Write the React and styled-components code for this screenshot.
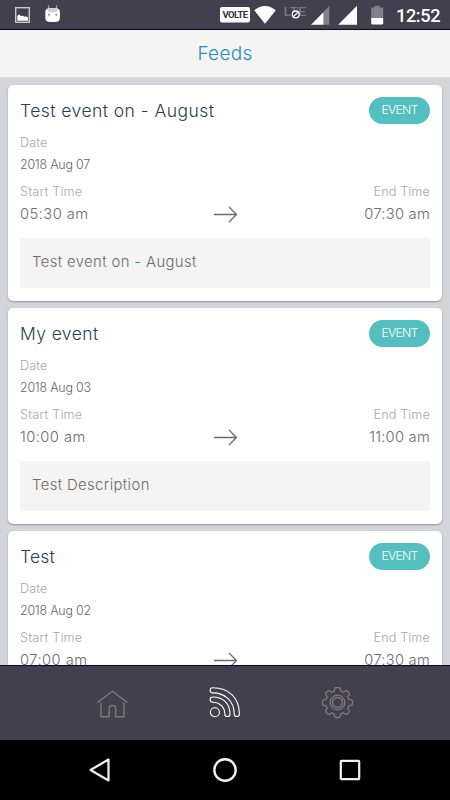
import React from 'react';
import styled, { createGlobalStyle } from 'styled-components';

const GlobalStyle = createGlobalStyle`
  body {
    margin: 0;
    overflow: hidden;
  }
`;

const Screen = styled.div`
  width: 450px;
  height: 800px;
  display: flex;
  flex-direction: column;
  overflow: hidden;
  background: #d2d6db;
  font-family: Inter, "Open Sans", sans-serif;
  font-weight: 300;
`;

const StatusBar = styled.div`
  height: 30px;
  flex: none;
  box-sizing: border-box;
  display: flex;
  justify-content: space-between;
  background: #423f4e;
  border-bottom: 1px solid #0b0720;
`;

const Header = styled.div`
  height: 48px;
  flex: none;
  box-sizing: border-box;
  background: #f4f4f4;
  border-bottom: 1px solid #dcdfe2;
  color: #2191bd;
  font-size: 19px;
  letter-spacing: 0.3px;
  line-height: 48px;
  text-align: center;
`;

const Feed = styled.div`
  flex: 1;
  min-height: 0;
  overflow: hidden;
  padding: 7px 8px 0;
`;

const Card = styled.div`
  height: 215.5px;
  box-sizing: border-box;
  margin-bottom: 7.5px;
  padding: 12px;
  border-radius: 5px;
  background: #fff;
  box-shadow: 0 1px 2px rgba(50, 60, 75, 0.45);
`;

const CardHeader = styled.div`
  height: 27px;
  margin-bottom: 10px;
  display: flex;
  justify-content: space-between;
`;

const Title = styled.div`
  color: #1f4254;
  font-size: 17.5px;
  line-height: 27px;
  letter-spacing: ${({ $spacing }) => $spacing}px;
  white-space: nowrap;
`;

const Badge = styled.div`
  width: 61px;
  height: 27px;
  border-radius: 14px;
  background: #53c0bf;
  color: #fff;
  font-size: 12.2px;
  font-weight: 350;
  letter-spacing: -0.7px;
  line-height: 26px;
  text-align: center;
`;

const Label = styled.div`
  color: #a8a8a8;
  font-size: 12.7px;
  line-height: 18px;
  letter-spacing: ${({ $spacing = 0.1 }) => $spacing}px;
`;

const DateValue = styled.div`
  margin-top: 3px;
  color: #666;
  font-size: 12.4px;
  font-weight: 350;
  line-height: 19px;
  letter-spacing: -0.2px;
`;

const Row = styled.div`
  margin-top: ${({ $top }) => $top}px;
  display: flex;
  align-items: center;
  justify-content: space-between;
`;

const Time = styled.div`
  width: 90px;
  color: #6b6b6b;
  font-size: 14.7px;
  font-weight: 350;
  line-height: 23px;
  letter-spacing: ${({ $spacing }) => $spacing}px;
  text-align: ${({ $align = 'left' }) => $align};
`;

const Description = styled.div`
  height: 50px;
  margin-top: 12px;
  padding: 0 12px;
  background: #f4f4f4;
  color: #6b6b6b;
  font-size: 14.8px;
  font-weight: 350;
  line-height: 48px;
  letter-spacing: ${({ $spacing }) => $spacing}px;
`;

const TabBar = styled.div`
  height: 75px;
  flex: none;
  box-sizing: border-box;
  padding: 0 56px;
  display: flex;
  align-items: center;
  background: #423f4e;
  border-top: 1px solid #0b0720;
`;

const Tab = styled.div`
  flex: 1;
  display: flex;
  justify-content: center;
  color: ${({ $active }) => ($active ? '#fff' : '#7d7a7e')};
`;

const NavBar = styled.div`
  height: 60px;
  flex: none;
  padding: 0 38px;
  box-sizing: border-box;
  display: flex;
  align-items: center;
  background: #000;
  color: #f2f2f2;
`;

const StatusGroup = styled.div`
  height: 29px;
  display: flex;
`;

const Clock = styled.div`
  width: 54px;
  color: #fff;
  font-family: Roboto, sans-serif;
  font-size: 18.2px;
  font-weight: 500;
  line-height: 31px;
  letter-spacing: -0.4px;
`;

const events = [
  { title: 'Test event on - August', date: '2018 Aug 07', start: '05:30 am', end: '07:30 am', description: 'Test event on - August', titleSpacing: 0.45 },
  { title: 'My event', date: '2018 Aug 03', start: '10:00 am', end: '11:00 am', description: 'Test Description', titleSpacing: 0.4 },
  { title: 'Test', date: '2018 Aug 02', start: '07:00 am', end: '07:30 am', description: 'Test', titleSpacing: 0.2 },
];

const Arrow = () => (
  <svg width="24" height="18" viewBox="0 0 24 18" fill="none" stroke="#6b6b6b" strokeWidth="1.3">
    <path d="M1 8.5H23.5M16 1L23.5 8.5L16 16" />
  </svg>
);

const NoticeIcons = () => (
  <svg width="70" height="29" viewBox="0 0 70 29">
    <rect x="15.7" y="7.7" width="13.6" height="14.6" fill="none" stroke="#c9c8cd" strokeWidth="1.4" />
    <path d="M17.3 20.7V16l1.7-1.7 2 1.9 1.4-.8 2 1.4 1.3-.6 2.3 1.2v3.3z" fill="#fff" />
    <path d="M48.2 5.2L49.3 9M57 5.2L55.8 9" stroke="#bbb9bf" strokeWidth="1" />
    <path d="M45.3 12.5Q45.3 8.2 49 8.2H56Q59.9 8.2 59.9 12.5V17.5Q59.9 22 55 22H50Q45.3 22 45.3 17.5z" fill="#fff" />
    <path d="M47 9.5Q48 8 50 8H55.3Q57.3 8 58.3 9.5L56 12.2H49.3z" fill="#cfced2" />
    <circle cx="49" cy="14.8" r="1" fill="#85838c" />
    <circle cx="56.3" cy="14.8" r="1" fill="#85838c" />
  </svg>
);

const SignalIcons = () => (
  <svg width="176" height="29" viewBox="220 0 176 29">
    <rect x="220" y="7" width="30" height="15.5" rx="2" fill="#fff" />
    <text x="222.6" y="18.2" fontFamily="Roboto, sans-serif" fontSize="9.5" fontWeight="700" textLength="25.5" fill="#34313f">VOLTE</text>
    <path d="M254.2 10.2Q265 1.6 275.8 10.2L265 23.8z" fill="#fff" />
    <text x="283.5" y="15.8" fontFamily="Roboto, sans-serif" fontSize="13.5" fontWeight="500" textLength="22.5" lengthAdjust="spacingAndGlyphs" fill="#777580">LTE</text>
    <circle cx="295.7" cy="14.4" r="3.4" fill="#423f4e" stroke="#fff" strokeWidth="1.3" />
    <path d="M293.6 16.5L297.8 12.3" stroke="#fff" strokeWidth="1.2" />
    <path d="M311 24.8L323.7 12V24.8z" fill="#fff" />
    <path d="M323.7 11.7L329.3 6V24.8H323.7z" fill="#817f89" />
    <path d="M338.2 24.8L357 5.8V24.8z" fill="#fff" />
    <path d="M371.2 7.5H374.5V5.8H380V7.5H383.2V18H371.2z" fill="#817f89" />
    <path d="M371.2 18H383.2V23.2Q383.2 24.5 382 24.5H372.4Q371.2 24.5 371.2 23.2z" fill="#fff" />
  </svg>
);

const HomeIcon = () => (
  <svg width="32" height="32" viewBox="0 0 32 32" fill="none" stroke="currentColor" strokeWidth="1.4" strokeLinecap="round" strokeLinejoin="round">
    <path d="M1.8 15.2L16.4 4.3L31 15.2" />
    <path d="M5 16V29.8H13.2V21.6A3.2 3.2 0 0 1 19.6 21.6V29.8H28V16" />
  </svg>
);

const RssIcon = () => (
  <svg width="32" height="32" viewBox="0 0 32 32" fill="none" stroke="currentColor" strokeWidth="1.1">
    <circle cx="5.9" cy="25.2" r="4.5" />
    <path d="M3.7 10C15 10 21 17.2 21 26.9A2.6 2.6 0 0 1 15.8 26.9C15.8 20.7 11 15.2 3.7 15.2A2.6 2.6 0 0 1 3.7 10z" />
    <path d="M3.7 .7C20 .7 30.4 11.2 30.4 26.9A2.6 2.6 0 0 1 25.2 26.9C25.2 14.2 16 5.9 3.7 5.9A2.6 2.6 0 0 1 3.7 .7z" />
  </svg>
);

const GearIcon = () => (
  <svg width="32" height="32" viewBox="-15.5 -15.5 32 32" fill="none" stroke="currentColor" strokeWidth="1.3" strokeLinejoin="round">
    <path d="M-3.4 -11.3L-2.7 -14Q-2.4 -15 -1.4 -15H1.4Q2.4 -15 2.7 -14L3.4 -11.3Q4.7 -10.9 5.7 -10.2L8 -11.7Q8.9 -12.2 9.7 -11.5L11.5 -9.7Q12.2 -8.9 11.7 -8L10.2 -5.7Q10.9 -4.7 11.3 -3.4L14 -2.7Q15 -2.4 15 -1.4V1.4Q15 2.4 14 2.7L11.3 3.4Q10.9 4.7 10.2 5.7L11.7 8Q12.2 8.9 11.5 9.7L9.7 11.5Q8.9 12.2 8 11.7L5.7 10.2Q4.7 10.9 3.4 11.3L2.7 14Q2.4 15 1.4 15H-1.4Q-2.4 15 -2.7 14L-3.4 11.3Q-4.7 10.9 -5.7 10.2L-8 11.7Q-8.9 12.2 -9.7 11.5L-11.5 9.7Q-12.2 8.9 -11.7 8L-10.2 5.7Q-10.9 4.7 -11.3 3.4L-14 2.7Q-15 2.4 -15 1.4V-1.4Q-15 -2.4 -14 -2.7L-11.3 -3.4Q-10.9 -4.7 -10.2 -5.7L-11.7 -8Q-12.2 -8.9 -11.5 -9.7L-9.7 -11.5Q-8.9 -12.2 -8 -11.7L-5.7 -10.2Q-4.7 -10.9 -3.4 -11.3z" />
    <circle r="7.3" />
    <circle r="5" />
  </svg>
);

const EventCard = ({ event }) => (
  <Card>
    <CardHeader>
      <Title $spacing={event.titleSpacing}>{event.title}</Title>
      <Badge>EVENT</Badge>
    </CardHeader>
    <Label>Date</Label>
    <DateValue>{event.date}</DateValue>
    <Row $top={9}>
      <Label $spacing={0.2}>Start Time</Label>
      <Label>End Time</Label>
    </Row>
    <Row $top={2}>
      <Time $spacing={0.45}>{event.start}</Time>
      <Arrow />
      <Time $spacing={0.25} $align="right">{event.end}</Time>
    </Row>
    <Description $spacing={0.4}>{event.description}</Description>
  </Card>
);

const App = () => (
  <>
    <GlobalStyle />
    <Screen>
      <StatusBar>
        <NoticeIcons />
        <StatusGroup>
          <SignalIcons />
          <Clock>12:52</Clock>
        </StatusGroup>
      </StatusBar>
      <Header>Feeds</Header>
      <Feed>
        {events.map(event => <EventCard key={event.date} event={event} />)}
      </Feed>
      <TabBar>
        <Tab><HomeIcon /></Tab>
        <Tab $active><RssIcon /></Tab>
        <Tab><GearIcon /></Tab>
      </TabBar>
      <NavBar>
        <Tab $active>
          <svg width="24" height="26" viewBox="0 0 24 26" fill="none" stroke="#f2f2f2" strokeWidth="2.2" strokeLinejoin="round">
            <path d="M2.5 13L20.5 2.5V23.5z" />
          </svg>
        </Tab>
        <Tab $active>
          <svg width="26" height="26" viewBox="0 0 26 26" fill="none" stroke="#f2f2f2" strokeWidth="2.4">
            <circle cx="13" cy="13" r="10.7" />
          </svg>
        </Tab>
        <Tab $active>
          <svg width="24" height="24" viewBox="0 0 24 24" fill="none" stroke="#f2f2f2" strokeWidth="2.2">
            <rect x="2.8" y="2.8" width="18.4" height="18.4" rx="0.6" />
          </svg>
        </Tab>
      </NavBar>
    </Screen>
  </>
);

export default App;
